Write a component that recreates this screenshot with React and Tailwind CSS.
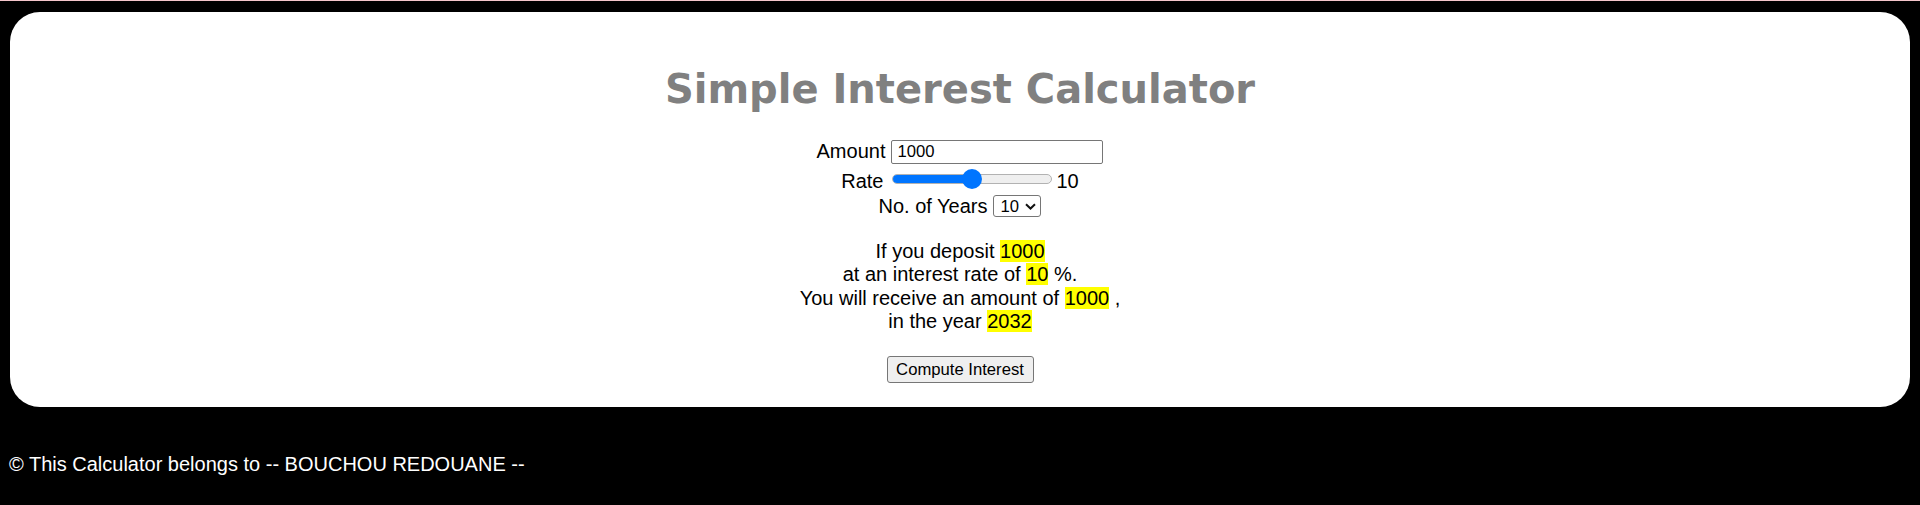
import { useState } from 'react';

function Slider({ value, min = 0, max = 20 }) {
  const pct = ((value - min) / (max - min)) * 100;
  return (
    <div className="relative mb-[6px] ml-[8px] h-[20px] w-[160px]">
      <div className="absolute left-0 right-0 top-[5px] h-[10px] overflow-hidden rounded-full border border-[#b2b2b2] bg-[#efefef]">
        <div className="h-full bg-[#0075ff]" style={{ width: `${pct}%` }} />
      </div>
      <div
        className="absolute top-0 h-[20px] w-[20px] -translate-x-1/2 rounded-full bg-[#0075ff]"
        style={{ left: `${pct}%` }}
      />
    </div>
  );
}

export default function App() {
  const [amount] = useState('1000');
  const [rate] = useState(10);
  const [years] = useState(10);

  return (
    <div className="min-h-[505px] bg-black font-['Liberation_Sans',Arial,sans-serif] text-[20px] text-black">
      <div className="h-px bg-[#f5c6cb]" />
      <div className="mx-[10px] mt-[11px] rounded-[30px] bg-white pb-[24px] pt-[54px] text-center">
        <h1 className="h-[46px] font-['DejaVu_Sans',Verdana,sans-serif] text-[40px] font-bold leading-[46px] text-[#808080]">
          Simple Interest Calculator
        </h1>

        <div className="mt-[27px] flex h-[25px] items-center justify-center leading-[23px]">
          <span>Amount</span>
          <div className="ml-[6px] flex h-[24px] w-[212px] items-center rounded-[2px] border border-[#767676] pl-[5px] text-left text-[16.67px]">
            {amount}
          </div>
        </div>

        <div className="flex h-[31px] items-center justify-center pt-[4px] leading-[23px]">
          <span>Rate</span>
          <Slider value={rate} min={0} max={20} />
          <span className="ml-[5px]">{rate}</span>
        </div>

        <div className="flex h-[22px] items-center justify-center leading-[23px]">
          <span>No. of Years</span>
          <div className="ml-[6px] flex h-[22px] w-[48px] items-center rounded-[3px] border border-[#767676] pl-[6px] text-[16.67px]">
            <span>{years}</span>
            <svg className="ml-[6px]" width="11" height="7" viewBox="0 0 11 7">
              <path d="M1 1.2 L5.5 5.5 L10 1.2" fill="none" stroke="#111" strokeWidth="2" />
            </svg>
          </div>
        </div>

        <div className="mt-[23px] leading-[23.3px]">
          <div>
            If you deposit <span className="bg-[#ffff00]">{amount}</span>
          </div>
          <div>
            at an interest rate of <span className="bg-[#ffff00]">{rate}</span> %.
          </div>
          <div>
            You will receive an amount of <span className="bg-[#ffff00]">1000</span> ,
          </div>
          <div>
            in the year <span className="bg-[#ffff00]">2032</span>
          </div>
        </div>

        <button
          type="button"
          className="mt-[23px] h-[27px] w-[147px] rounded-[3px] border border-[#767676] bg-[#efefef] text-[16.67px] leading-[25px] text-black"
        >
          Compute Interest
        </button>
      </div>

      <p className="mt-[46px] pl-[9px] leading-[23px] text-white">© This Calculator belongs to -- BOUCHOU REDOUANE --</p>
    </div>
  );
}
